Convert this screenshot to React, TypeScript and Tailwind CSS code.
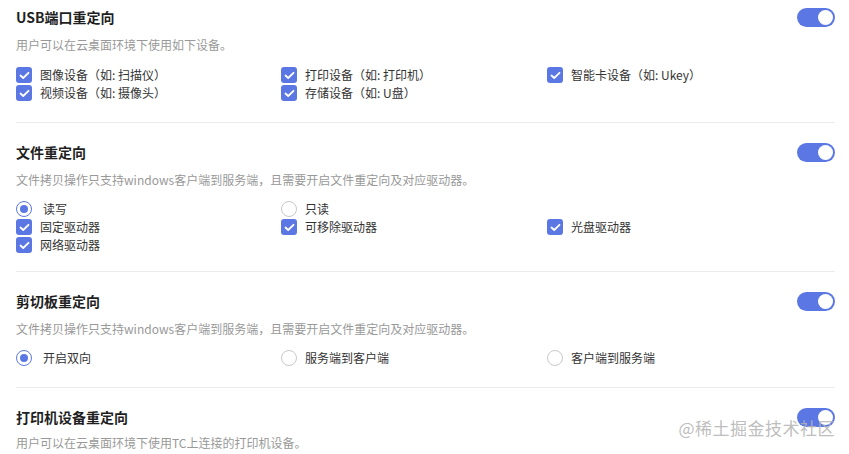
import React from 'react';

const Check = ({ label }: { label: string }) => (
    <div className="flex items-center h-[18px] gap-2">
        <span className="w-4 h-4 rounded-[3px] bg-[#5a77e3] flex items-center justify-center shrink-0">
            <svg width="11" height="9" viewBox="0 0 11 9" fill="none">
                <path d="M1.5 4.5 L4.2 7 L9.5 1.8" stroke="white" strokeWidth="1.8" strokeLinecap="round" strokeLinejoin="round" />
            </svg>
        </span>
        <span className="text-[12px] text-[#333] leading-[18px]">{label}</span>
    </div>
);

const Radio = ({ label, checked }: { label: string; checked?: boolean }) => (
    <div className="flex items-center h-[18px] gap-2">
        <span className={`w-4 h-4 rounded-full border flex items-center justify-center shrink-0 bg-white ${checked ? 'border-[#5a77e3]' : 'border-[#c8c8c8]'}`}>
            {checked && <span className="w-2 h-2 rounded-full bg-[#5a77e3]" />}
        </span>
        <span className={`text-[12px] text-[#333] leading-[18px] ${checked ? 'pl-[3px]' : ''}`}>{label}</span>
    </div>
);

const Toggle = () => (
    <div className="w-[38px] h-[19px] rounded-full bg-[#5a77e3] flex items-center justify-end pr-[2px]">
        <span className="w-[15px] h-[15px] rounded-full bg-white" />
    </div>
);

type SectionProps = { title: string; desc: string; first?: boolean; last?: boolean; pb?: string; children?: React.ReactNode };

const Section = ({ title, desc, first, last, pb, children }: SectionProps) => (
    <div className={`${first ? 'pt-[7px]' : 'pt-[19px]'} ${last ? '' : `${pb} border-b border-[#ebebeb]`}`}>
        <div className="flex items-center justify-between h-5">
            <h3 className="text-[14px] font-bold text-[#1f1f1f] leading-5">{title}</h3>
            <Toggle />
        </div>
        <p className={`${last ? 'mt-[6px]' : 'mt-2'} text-[12px] text-[#999] leading-5`}>{desc}</p>
        {children && <div className={first ? 'mt-[11px]' : 'mt-[10px]'}>{children}</div>}
    </div>
);

const Grid = ({ children }: { children: React.ReactNode }) => (
    <div className="grid grid-cols-[265px_266px_1fr]">{children}</div>
);

export default function App() {
    const fileDesc = '文件拷贝操作只支持windows客户端到服务端，且需要开启文件重定向及对应驱动器。';
    return (
        <div className="relative w-[849px] h-[454px] overflow-hidden bg-white" style={{ fontFamily: '"Noto Sans CJK SC", "Noto Sans", sans-serif' }}>
            <div className="pl-4 pr-[14px]">
                <Section title="USB端口重定向" desc="用户可以在云桌面环境下使用如下设备。" first pb="pb-5">
                    <Grid>
                        <Check label="图像设备（如: 扫描仪）" />
                        <Check label="打印设备（如: 打印机）" />
                        <Check label="智能卡设备（如: Ukey）" />
                        <Check label="视频设备（如: 摄像头）" />
                        <Check label="存储设备（如: U盘）" />
                    </Grid>
                </Section>
                <Section title="文件重定向" desc={fileDesc} pb="pb-[17px]">
                    <Grid>
                        <Radio label="读写" checked />
                        <Radio label="只读" />
                        <div />
                        <Check label="固定驱动器" />
                        <Check label="可移除驱动器" />
                        <Check label="光盘驱动器" />
                        <Check label="网络驱动器" />
                    </Grid>
                </Section>
                <Section title="剪切板重定向" desc={fileDesc} pb="pb-5">
                    <Grid>
                        <Radio label="开启双向" checked />
                        <Radio label="服务端到客户端" />
                        <Radio label="客户端到服务端" />
                    </Grid>
                </Section>
                <Section title="打印机设备重定向" desc="用户可以在云桌面环境下使用TC上连接的打印机设备。" last />
            </div>
            <div className="absolute right-[14px] top-[416px] text-[17px] text-[#b5b5b5]/90 leading-6 tracking-[0.5px]">@稀土掘金技术社区</div>
        </div>
    );
}
